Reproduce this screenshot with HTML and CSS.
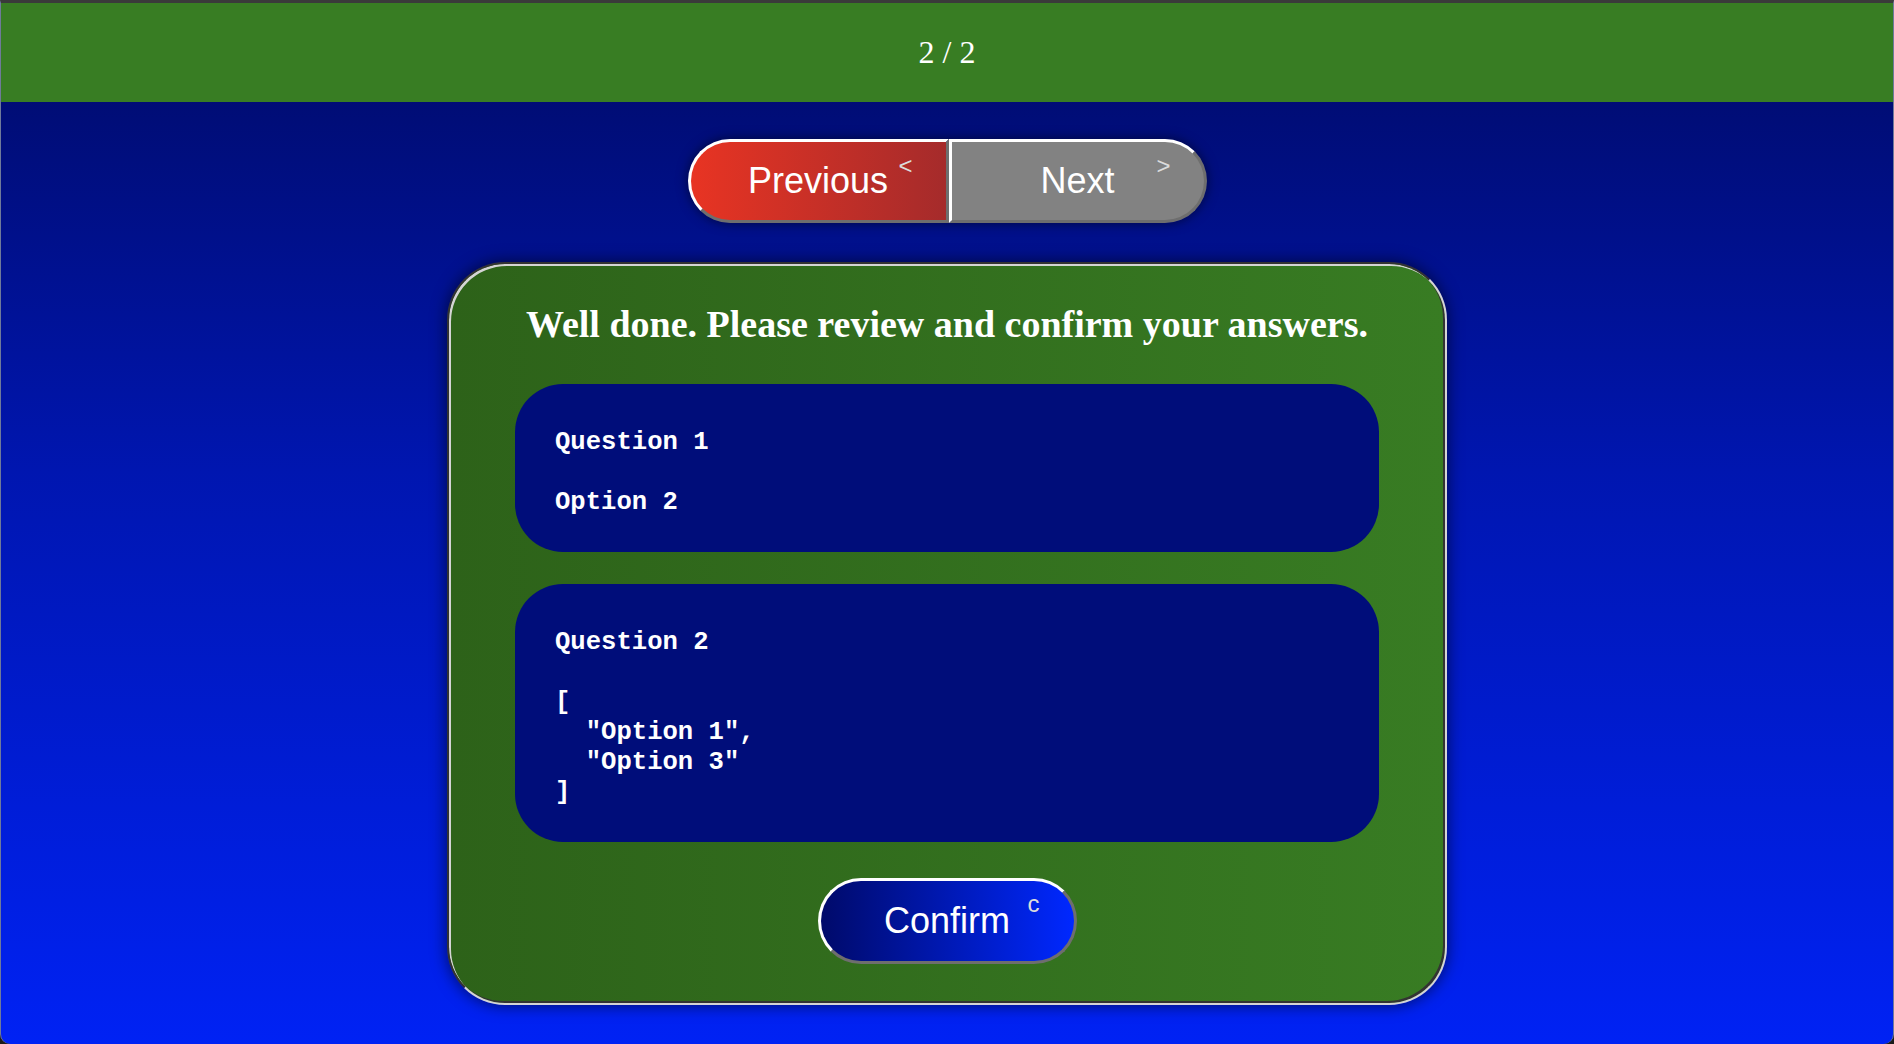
FILE: index.html
```html
<!DOCTYPE html>
<html lang="en">
<head>
<meta charset="utf-8">
<title>Review</title>
<link rel="stylesheet" href="styles.css">
</head>
<body>
<div class="window">
  <header class="topbar">2 / 2</header>
  <main class="stage">
    <nav class="pager">
      <button class="pager-btn prev">Previous<span class="key">&lt;</span></button>
      <button class="pager-btn next">Next<span class="key">&gt;</span></button>
    </nav>
    <section class="card">
      <h1 class="card-title">Well done. Please review and confirm your answers.</h1>
      <div class="answer"><pre>Question 1

Option 2</pre></div>
      <div class="answer"><pre>Question 2

[
  "Option 1",
  "Option 3"
]</pre></div>
      <button class="confirm">Confirm<span class="key key-c">c</span></button>
    </section>
  </main>
</div>
</body>
</html>
```

FILE: styles.css
```css
* { box-sizing: border-box; }

html, body {
  margin: 0;
  height: 100%;
  background: #1a1a1a;
}

.window {
  height: 1044px;
  display: flex;
  flex-direction: column;
  border-top: 3px solid #3a3a3a;
  border-left: 1px solid #6f7a9a;
  border-right: 1px solid #6f7a9a;
  border-radius: 0 0 10px 10px;
  overflow: hidden;
  background: linear-gradient(180deg, #000a66 0%, #0016b0 45%, #0022f4 100%);
}

.topbar {
  height: 99px;
  flex: none;
  display: flex;
  align-items: center;
  justify-content: center;
  background: #387d23;
  color: #fff;
  font-family: "Liberation Serif", "Times New Roman", serif;
  font-size: 32px;
}

.stage {
  flex: 1;
  display: flex;
  flex-direction: column;
  align-items: center;
  padding-top: 37px;
}

.pager {
  display: flex;
  border-radius: 44px;
  box-shadow: 0 0 12px rgba(0, 0, 0, 0.55);
}

.pager-btn,
.confirm {
  position: relative;
  width: 259px;
  height: 84px;
  border: 3px solid;
  border-color: #ffffff #6e6e6e #6e6e6e #ffffff;
  color: #fff;
  font-family: "Liberation Sans", Arial, sans-serif;
  font-size: 36px;
  padding: 0;
  cursor: pointer;
}

.prev {
  width: 261px;
  border-radius: 42px 0 0 42px;
  background: linear-gradient(90deg, #e83423 0%, #a52b2b 100%);
}

.next {
  width: 258px;
  border-radius: 0 42px 42px 0;
  background: #828282;
}

.key {
  position: absolute;
  top: 10px;
  right: 33px;
  font-size: 24px;
  color: #dcdcdc;
}

.card {
  margin-top: 39px;
  width: 1000px;
  padding: 39px 66px 39px;
  display: flex;
  flex-direction: column;
  align-items: center;
  border: 2px solid;
  border-color: #333 #d4d4d4 #d4d4d4 #333;
  border-radius: 58px;
  background: linear-gradient(90deg, #2d6219 0%, #387c23 100%);
  box-shadow: inset 2px 2px 0 #d4d4d4, inset -2px -2px 0 #333, 0 0 16px rgba(0, 0, 0, 0.6);
}

.card-title {
  margin: 0 0 39px;
  color: #fff;
  font-family: "Liberation Serif", "Times New Roman", serif;
  font-weight: bold;
  font-size: 38px;
  line-height: 42px;
  text-align: center;
}

.answer {
  align-self: stretch;
  margin-bottom: 32px;
  padding: 44px 40px 34px 40px;
  border-radius: 48px;
  background: #000d7a;
}

.answer pre {
  margin: 0;
  color: #fff;
  font-family: "Liberation Mono", "Courier New", monospace;
  font-weight: bold;
  font-size: 25.6px;
  line-height: 30px;
}

.confirm {
  margin-top: 4px;
  height: 86px;
  border-radius: 43px;
  background: linear-gradient(90deg, #000a6a 0%, #0028ff 100%);
}

.key-c {
  top: 9px;
  right: 34px;
}
```
